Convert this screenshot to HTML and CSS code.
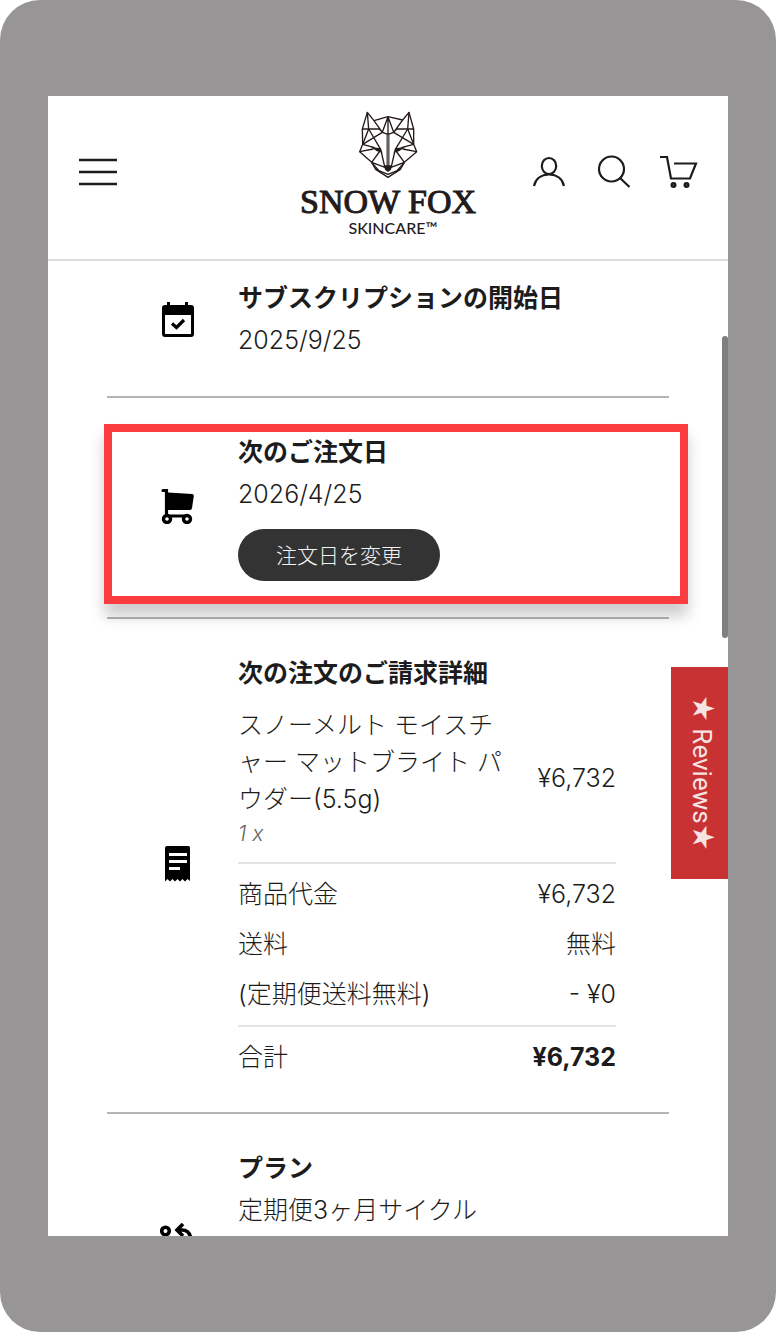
FILE: index.html
```html
<!DOCTYPE html>
<html lang="ja">
<head>
<meta charset="utf-8">
<meta name="viewport" content="width=device-width, initial-scale=1">
<title>SNOW FOX SKINCARE</title>
<link rel="stylesheet" href="styles.css">
</head>
<body>
<div class="device">
  <div class="screen">
    <header class="header">
      <button class="icon-button" type="button" aria-label="メニュー">
        <svg width="40" height="30" viewBox="0 0 40 30" fill="none" stroke="#1c1c1c" stroke-width="2.400"><path d="M1 3H39M1 15H39M1 27H39"/></svg>
      </button>
      <a class="logo" href="#">
        <svg class="fox" width="76" height="72" viewBox="180 40 228 216" fill="none" stroke="#231a19" stroke-width="4" stroke-linejoin="round" aria-hidden="true">
          <path d="M232 47 217 97 218 143 209 165 245 197 257 218 294 242 331 218 343 197 380 165 371 143 371 97 357 47 338 70 294 60 252 72Z"/>
          <path d="M232 47 236 97 218 143M357 47 353 97 371 143M217 97H268L277 107M371 97H320L311 107M252 72 277 107M338 70 311 107"/>
          <path d="M277 107 294 60 311 107 294 113ZM218 143 277 107M371 143 311 107M236 97 272 158M353 97 316 158M294 60V210" />
          <path d="M290 113V210M298 113V210" stroke-width="1.500"/>
          <path d="M218 143 254 153M371 143 334 153M209 165 250 157M380 165 338 157M270 163 245 197 287 213M318 163 343 197 301 213M274 166 284 210M314 166 304 210M257 218 294 233 331 218M245 197 270 226M343 197 318 226"/>
          <path fill="#231a19" stroke="none" d="M242 151 273 155 277 168 261 164ZM346 151 315 155 311 168 327 164ZM282 206H306L303 219 294 226 285 219Z"/>
        </svg>
        <span class="logo-name">SNOW FOX</span>
        <span class="logo-sub">SKINCARE™</span>
      </a>
      <nav class="actions" aria-label="アカウントとカート">
        <a href="#" aria-label="アカウント">
          <svg width="34" height="34" viewBox="0 0 34 34" fill="none" stroke="#1c1c1c" stroke-width="2.2"><ellipse cx="17" cy="11" rx="7.2" ry="8"/><path d="M2 31C3.500 24 9 19.500 17 19.500S30.500 24 32 31"/></svg>
        </a>
        <a href="#" aria-label="検索">
          <svg width="34" height="34" viewBox="0 0 34 34" fill="none" stroke="#1c1c1c" stroke-width="2.200"><circle cx="15.500" cy="14" r="12.500"/><path d="M24 23 33.500 32"/></svg>
        </a>
        <a href="#" aria-label="カート">
          <svg width="38" height="34" viewBox="0 0 38 34" fill="none" stroke="#1c1c1c" stroke-width="2.200"><path d="M0 2H7L11 23.500H30L36 8.500H14"/><circle cx="13.500" cy="30" r="1.700" stroke-width="2.600"/><circle cx="26.500" cy="30" r="1.700" stroke-width="2.600"/></svg>
        </a>
      </nav>
    </header>

    <main class="details">
      <section class="item item-first">
        <svg class="item-icon" viewBox="0 0 36 36" aria-hidden="true"><path fill-rule="evenodd" d="M7 1H10V4H25V1H28V4H31Q34 4 34 7V33Q34 36 31 36H5Q2 36 2 33V7Q2 4 5 4H7ZM5 14V33H31V14Z"/><path d="M12 22.500 16.500 26.500 24 19" fill="none" stroke="#000" stroke-width="3.200"/></svg>
        <div>
          <h2 class="title">サブスクリプションの開始日</h2>
          <p class="value">2025/9/25</p>
        </div>
      </section>

      <section class="item">
        <svg class="item-icon" viewBox="0 0 36 36" aria-hidden="true"><path d="M8 4.500 32 6Q34 6.200 33.800 8L32 20Q31.700 22 30 22H8Z"/><path d="M3 2.500H6.500V28H26" fill="none" stroke="#000" stroke-width="3.200" stroke-linecap="round"/><circle cx="7" cy="31" r="3.500" fill="#fff" stroke="#000" stroke-width="3.400"/><circle cx="27" cy="31" r="3.500" fill="#fff" stroke="#000" stroke-width="3.400"/></svg>
        <div>
          <h2 class="title">次のご注文日</h2>
          <p class="value">2026/4/25</p>
          <button class="change" type="button">注文日を変更</button>
        </div>
        <div class="highlight"></div>
      </section>

      <section class="item">
        <svg class="item-icon" viewBox="0 0 36 36" aria-hidden="true"><path fill-rule="evenodd" d="M7 0H28.500Q30 0 30 2V35L27.500 33 25 35.500 22.500 33 20 35.500 17.500 33 15 35.500 12.500 33 10 35.500 7.500 33 5 35.500V2Q5 0 7 0ZM9 7V10H27V7ZM9 14V17H27V14ZM9 21V24H20V21Z"/></svg>
        <div>
          <h2 class="title">次の注文のご請求詳細</h2>
          <table class="bill">
            <tbody class="group product">
              <tr>
                <th scope="row">スノーメルト モイスチャー マットブライト パウダー(5.5g)<em class="quantity">1 x</em></th>
                <td>¥6,732</td>
              </tr>
            </tbody>
            <tbody class="group">
              <tr><th scope="row">商品代金</th><td>¥6,732</td></tr>
              <tr><th scope="row">送料</th><td>無料</td></tr>
              <tr><th scope="row">(定期便送料無料)</th><td>- ¥0</td></tr>
            </tbody>
            <tbody class="group">
              <tr><th scope="row">合計</th><td class="total">¥6,732</td></tr>
            </tbody>
          </table>
        </div>
      </section>

      <section class="item">
        <svg class="item-icon" viewBox="0 0 36 36" aria-hidden="true"><g fill="none" stroke="#000" stroke-width="3.600"><circle cx="5.500" cy="8" r="3.800"/><circle cx="30" cy="28" r="3.800"/><path d="M23 1 17 7 23 13M18 7H22Q30 7 31 17V23M5.500 12V20Q6 29 14 29H18M13 23 19 29 13 35"/></g></svg>
        <div class="plan">
          <h2 class="title">プラン</h2>
          <p class="value">定期便3ヶ月サイクル</p>
        </div>
      </section>
    </main>
    <div class="scroll-thumb"></div>
    <button class="reviews" type="button"><span class="star">★</span> Reviews<span class="star">★</span></button>
  </div>
</div>
</body>
</html>
```
FILE: styles.css
```css
* {
  box-sizing: border-box;
}

body {
  margin: 0;
  background: #fff;
  color: #1c1c1c;
  font-family: Inter, "Noto Sans CJK JP", sans-serif;
  font-size: 25px;
  font-weight: 300;
}

button {
  border: 0;
  font: inherit;
  cursor: pointer;
}

svg {
  display: block;
}

.device {
  display: flex;
  height: 100vh;
  padding: 96px 48px;
  border-radius: 40px;
  background: #979595;
}

.screen {
  position: relative;
  flex: 1;
  min-width: 0;
  overflow: hidden;
  background: #fff;
}

.header {
  display: grid;
  grid-template-columns: 1fr auto 1fr;
  align-items: center;
  height: 165px;
  padding: 0 30px;
  border-bottom: 2px solid #dedede;
}

.icon-button {
  justify-self: start;
  margin-bottom: 12px;
  padding: 0;
  background: none;
}

.logo {
  display: flex;
  flex-direction: column;
  align-items: center;
  margin-bottom: 8px;
  color: #231a19;
  text-decoration: none;
  white-space: nowrap;
}

.logo-name {
  margin-top: 4px;
  font-family: "Liberation Serif", serif;
  font-size: 34px;
  font-weight: 400;
  line-height: 32px;
  -webkit-text-stroke: 1px #231a19;
}

.logo-sub {
  padding-left: 10px;
  font-family: Lato, sans-serif;
  font-size: 16px;
  font-weight: 500;
  line-height: 20px;
}

.actions {
  display: flex;
  justify-content: flex-end;
  gap: 30px;
  margin-bottom: 12px;
}

.details {
  padding: 0 59px;
}

.item {
  position: relative;
  display: grid;
  grid-template-columns: 36px 1fr;
  gap: 42px;
  align-items: center;
  padding: 33px 53px 36px;
  border-bottom: 2px solid #b5b5b5;
}

.item-first {
  padding-top: 16px;
  padding-bottom: 35px;
}

.item-icon {
  width: 36px;
  height: 36px;
}

.title,
.value {
  margin: 0;
  font-size: 25px;
  line-height: 42px;
}

.title {
  font-weight: 700;
}

.change {
  display: block;
  height: 52px;
  margin-top: 14px;
  padding: 0 38px 2px;
  border-radius: 26px;
  background: #333;
  color: #f2f2f2;
  font-size: 21px;
}

.highlight {
  position: absolute;
  inset: 26px -19px 13px -3px;
  z-index: 1;
  border: 8px solid #fb3c3e;
  box-shadow: 0 12px 14px rgba(0, 0, 0, 0.2);
  pointer-events: none;
}

.bill {
  width: 100%;
  margin-top: 7px;
  border-collapse: collapse;
  line-height: 38px;
}

.bill th {
  padding: 6px 0;
  font-weight: 300;
  text-align: left;
}

.bill td {
  padding: 6px 0 6px 24px;
  text-align: right;
  white-space: nowrap;
}

.group + .group {
  border-top: 2px solid #e4e4e4;
}

.group + .group tr:first-child > * {
  padding-top: 11px;
}

.group tr:last-child > * {
  padding-bottom: 12px;
}

.group:last-child tr:last-child > * {
  padding-bottom: 0;
}

.product {
  line-height: 37px;
}

.quantity {
  display: block;
  color: #666;
  font-size: 21px;
  line-height: 32px;
}

.bill .total {
  font-weight: 700;
}

.plan {
  padding-bottom: 104px;
}

.scroll-thumb {
  position: absolute;
  top: 240px;
  right: 0;
  width: 6px;
  height: 302px;
  border-radius: 3px;
  background: #7f7f7f;
}

.reviews {
  position: absolute;
  top: 571px;
  right: 0;
  width: 57px;
  height: 212px;
  padding: 0 0 0 6px;
  background: #c93233;
  color: #f6e4e4;
  font-family: Roboto, "DejaVu Sans", sans-serif;
  font-size: 26px;
  font-weight: 400;
  line-height: 32px;
  writing-mode: vertical-rl;
  text-orientation: sideways;
}

.star {
  font-size: 30px;
}
```
